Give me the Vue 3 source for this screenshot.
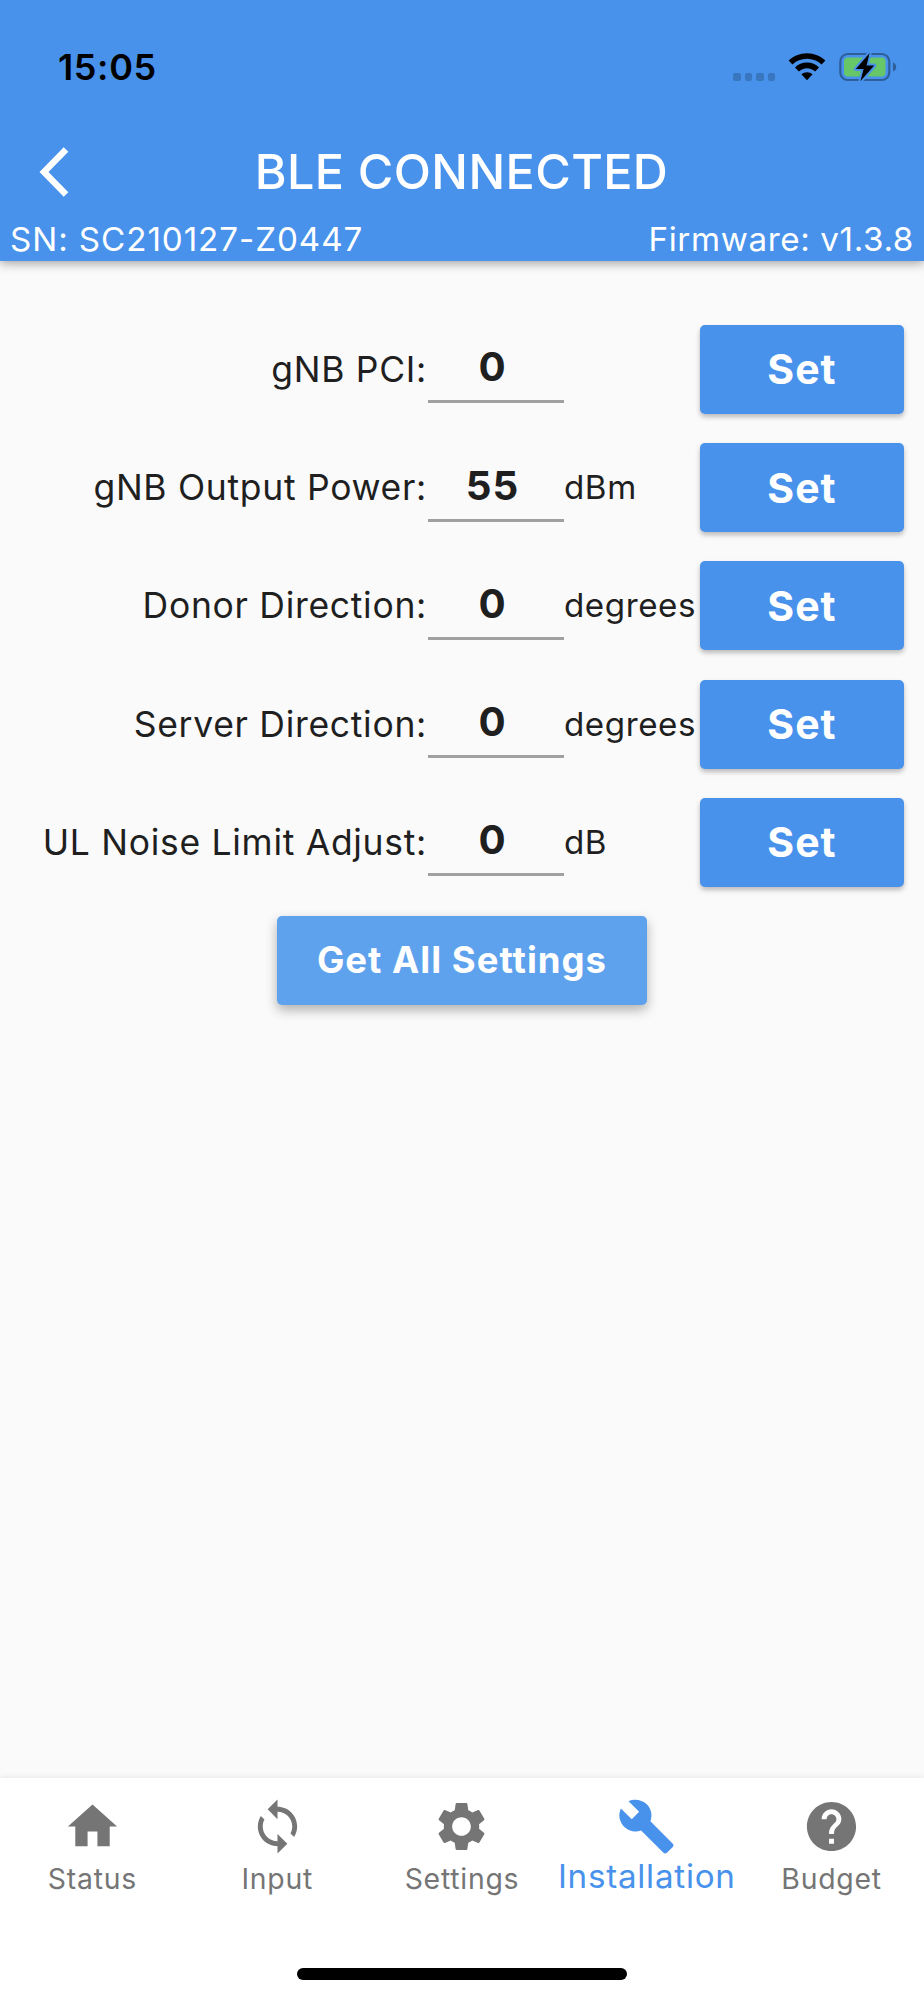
<template>
  <div class="screen">
    <header class="app-bar">
      <div class="status-bar">
        <span class="clock">15:05</span>
        <div class="indicators">
          <div class="signal">
            <i v-for="n in 4" :key="n"></i>
          </div>
          <svg class="wifi" viewBox="0 0 38 28">
            <path d="M19 0.2C26.2 0.2 32.6 3 37.4 7.6L33.6 11.6C29.8 7.9 24.7 5.8 19 5.8S8.2 7.9 4.4 11.6L0.6 7.6C5.4 3 11.8 0.2 19 0.2Z" />
            <path d="M19 9.6C23.7 9.6 27.9 11.4 31 14.4L27.1 18.5C25 16.5 22.1 15.2 19 15.2S13 16.5 10.9 18.5L7 14.4C10.1 11.4 14.3 9.6 19 9.6Z" />
            <path d="M19 19.2C21.2 19.2 23.1 20 24.6 21.2L19 27.2L13.4 21.2C14.9 20 16.8 19.2 19 19.2Z" />
          </svg>
          <svg class="battery" viewBox="0 0 58 30">
            <rect class="shell" x="1.3" y="2" width="49" height="26" rx="7.5" />
            <path class="cap" d="M54 10.5C56 11.3 57.2 13 57.2 15S56 18.7 54 19.5Z" />
            <rect class="level" x="5" y="5.6" width="41.5" height="18.8" rx="4" />
            <path class="bolt" d="M30.6 1L16.8 17H24.6L21.4 29.2L35.2 13.6H27.6Z" />
          </svg>
        </div>
      </div>
      <div class="title-row">
        <button class="back" @click="goBack">
          <svg viewBox="0 0 30 50">
            <path d="M27 2.5L5 25L27 47.5" />
          </svg>
        </button>
        <h1 class="title">BLE CONNECTED</h1>
      </div>
      <div class="device-info">
        <span class="serial">SN: SC210127-Z0447</span>
        <span class="firmware">Firmware: v1.3.8</span>
      </div>
    </header>

    <main class="content">
      <div class="row" v-for="item in settings" :key="item.key">
        <label class="label" :for="item.key">{{ item.label }}</label>
        <input class="value" :id="item.key" v-model="item.value" />
        <span class="unit">{{ item.unit }}</span>
        <button class="btn set-btn">Set</button>
      </div>
      <button class="btn get-btn">Get All Settings</button>
    </main>

    <nav class="bottom-nav">
      <div class="tabs">
        <button
          v-for="tab in tabs"
          :key="tab.name"
          class="tab"
          :class="{ active: tab.name === current }"
          @click="current = tab.name"
        >
          <svg class="tab-icon" viewBox="0 0 24 24"><path :d="tab.icon" /></svg>
          <span class="tab-label">{{ tab.name }}</span>
        </button>
      </div>
      <div class="home-indicator"></div>
    </nav>
  </div>
</template>

<script setup>
import { ref } from "vue";

const current = ref("Installation");

const settings = ref([
  { key: "pci", label: "gNB PCI:", value: "0", unit: "" },
  { key: "power", label: "gNB Output Power:", value: "55", unit: "dBm" },
  { key: "donor", label: "Donor Direction:", value: "0", unit: "degrees" },
  { key: "server", label: "Server Direction:", value: "0", unit: "degrees" },
  { key: "noise", label: "UL Noise Limit Adjust:", value: "0", unit: "dB" },
]);

const tabs = [
  { name: "Status", icon: "M10 20v-6h4v6h5v-8h3L12 3 2 12h3v8z" },
  {
    name: "Input",
    icon: "M12 4V1L8 5l4 4V6c3.31 0 6 2.69 6 6 0 1.01-.25 1.97-.7 2.8l1.46 1.46C19.54 15.03 20 13.57 20 12c0-4.42-3.58-8-8-8zm0 14c-3.31 0-6-2.69-6-6 0-1.01.25-1.97.7-2.8L5.24 7.74C4.46 8.97 4 10.43 4 12c0 4.42 3.58 8 8 8v3l4-4-4-4v3z",
  },
  {
    name: "Settings",
    icon: "M19.14 12.94c.04-.3.06-.61.06-.94 0-.32-.02-.64-.07-.94l2.03-1.58c.18-.14.23-.41.12-.61l-1.92-3.32c-.12-.22-.37-.29-.59-.22l-2.39.96c-.5-.38-1.03-.7-1.62-.94l-.36-2.54c-.04-.24-.24-.41-.48-.41h-3.84c-.24 0-.43.17-.47.41l-.36 2.54c-.59.24-1.13.57-1.62.94l-2.39-.96c-.22-.08-.47 0-.59.22L2.74 8.87c-.12.21-.08.47.12.61l2.03 1.58c-.05.3-.09.63-.09.94s.02.64.07.94l-2.03 1.58c-.18.14-.23.41-.12.61l1.92 3.32c.12.22.37.29.59.22l2.39-.96c.5.38 1.03.7 1.62.94l.36 2.54c.05.24.24.41.48.41h3.84c.24 0 .44-.17.47-.41l.36-2.54c.59-.24 1.13-.56 1.62-.94l2.39.96c.22.08.47 0 .59-.22l1.92-3.32c.12-.22.07-.47-.12-.61l-2.01-1.58zM12 15.8c-2.1 0-3.8-1.7-3.8-3.8s1.7-3.8 3.8-3.8 3.8 1.7 3.8 3.8-1.7 3.8-3.8 3.8z",
  },
  {
    name: "Installation",
    icon: "M22.7 19l-9.1-9.1c.9-2.3.4-5-1.5-6.9-2-2-5-2.4-7.4-1.3L9 6 6 9 1.6 4.7C.4 7.1.9 10.1 2.9 12.1c1.9 1.9 4.6 2.4 6.9 1.5l9.1 9.1c.4.4 1 .4 1.4 0l2.3-2.3c.5-.4.5-1.1.1-1.4z",
  },
  {
    name: "Budget",
    icon: "M12 2C6.48 2 2 6.48 2 12s4.48 10 10 10 10-4.48 10-10S17.52 2 12 2zm1 17h-2v-2h2v2zm2.07-7.75l-.9.92C13.45 12.9 13 13.5 13 15h-2v-.5c0-1.1.45-2.1 1.17-2.83l1.24-1.26c.37-.36.59-.86.59-1.41 0-1.1-.9-2-2-2s-2 .9-2 2H8c0-2.21 1.79-4 4-4s4 1.79 4 4c0 .88-.36 1.68-.93 2.25z",
  },
];

function goBack() {
  window.history.back();
}
</script>

<style>
body {
  margin: 0;
  background: #fafafa;
}
</style>

<style scoped>
.screen {
  display: flex;
  flex-direction: column;
  width: 924px;
  height: 2000px;
  overflow: hidden;
  background: #fafafa;
  font-family: Inter, "Liberation Sans", sans-serif;
  color: #1f1f1f;
}
button {
  border: none;
  padding: 0;
  background: none;
  font-family: inherit;
}
.app-bar {
  display: flex;
  flex-direction: column;
  flex: none;
  height: 261px;
  background: #4892ec;
  color: #fff;
  box-shadow: 0 2px 10px rgba(0, 0, 0, 0.38);
}
.status-bar {
  display: flex;
  justify-content: space-between;
  height: 111px;
  padding: 0 27px 0 58px;
  color: #000;
}
.clock {
  margin-top: 44px;
  font-size: 36px;
  line-height: 46px;
  font-weight: 600;
  letter-spacing: 0.6px;
}
.indicators {
  display: flex;
  align-items: flex-start;
  margin-top: 52px;
}
.signal {
  display: flex;
  gap: 4px;
  margin: 21px 13px 0 0;
}
.signal i {
  width: 7.5px;
  height: 7.5px;
  border-radius: 2px;
  background: #3876bf;
}
.wifi {
  width: 38px;
  height: 28px;
  margin: 1px 13px 0 0;
}
.battery {
  width: 58px;
  height: 30px;
}
.battery .shell {
  fill: none;
  stroke: #2e5e9a;
  stroke-width: 2.2;
}
.battery .cap {
  fill: #2e5e9a;
}
.battery .level {
  fill: #67c667;
}
.battery .bolt {
  fill: #000;
  stroke: #4892ec;
  stroke-width: 4;
  stroke-linejoin: round;
  paint-order: stroke;
}
.title-row {
  display: grid;
  grid-template-columns: 110px 1fr 110px;
  align-items: center;
  height: 122px;
}
.back {
  height: 50px;
  padding-left: 39px;
  text-align: left;
}
.back svg {
  display: block;
  width: 30px;
  height: 50px;
}
.back path {
  fill: none;
  stroke: #fff;
  stroke-width: 6.4;
}
.title {
  margin: 0;
  padding-right: 1px;
  text-align: center;
  font-size: 48.5px;
  line-height: 60px;
  font-weight: 500;
  letter-spacing: 0.4px;
  white-space: nowrap;
}
.device-info {
  display: flex;
  justify-content: space-between;
  margin-top: -14px;
  padding: 0 10px;
  font-size: 33.2px;
  line-height: 40px;
}
.serial {
  letter-spacing: 0.92px;
}
.firmware {
  letter-spacing: 0.62px;
}
.content {
  display: flex;
  flex-direction: column;
  flex: 1;
  padding: 49.3px 20px 0;
}
.row {
  display: grid;
  grid-template-columns: 6fr 2fr 2fr 3fr;
  align-items: center;
  height: 118.25px;
}
.label {
  padding-right: 1px;
  text-align: right;
  font-size: 35.5px;
  letter-spacing: 0.7px;
  white-space: nowrap;
}
.value {
  box-sizing: border-box;
  width: 136px;
  height: 78px;
  margin-top: -10px;
  padding: 8px 7px 0 0;
  border: none;
  border-bottom: 3px solid #a0a0a0;
  border-radius: 0;
  outline: none;
  background: transparent;
  color: inherit;
  font-family: inherit;
  font-size: 40.3px;
  font-weight: 700;
  letter-spacing: 1px;
  text-align: center;
}
.unit {
  margin-top: -1px;
  font-size: 33.2px;
  letter-spacing: 0.55px;
}
.btn {
  height: 89px;
  border-radius: 5px;
  background: #4892ec;
  color: #fff;
  font-weight: 700;
  letter-spacing: 1px;
}
.set-btn {
  font-size: 41px;
  box-shadow: 0 3px 5px rgba(0, 0, 0, 0.26);
}
.get-btn {
  align-self: center;
  width: 370px;
  margin-top: 14.2px;
  background: #5ea2ee;
  font-size: 36.5px;
  box-shadow: 0 5px 12px rgba(0, 0, 0, 0.3);
}
.bottom-nav {
  display: flex;
  flex-direction: column;
  flex: none;
  height: 222px;
  background: #fff;
  box-shadow: 0 -1px 6px rgba(0, 0, 0, 0.08);
}
.tabs {
  display: grid;
  grid-template-columns: repeat(5, 1fr);
}
.tab {
  display: flex;
  flex-direction: column;
  align-items: center;
  height: 190px;
  padding-top: 19px;
  color: #757575;
}
.tab-icon {
  width: 59px;
  height: 59px;
  fill: currentColor;
}
.tab-label {
  margin-top: 3px;
  font-size: 28.4px;
  line-height: 40px;
  letter-spacing: 0.75px;
}
.tab.active {
  color: #4892ec;
}
.tab.active .tab-label {
  margin-top: 0;
  font-size: 33.2px;
}
.home-indicator {
  width: 330px;
  height: 12px;
  margin: 0 auto;
  border-radius: 6px;
  background: #000;
}
</style>
